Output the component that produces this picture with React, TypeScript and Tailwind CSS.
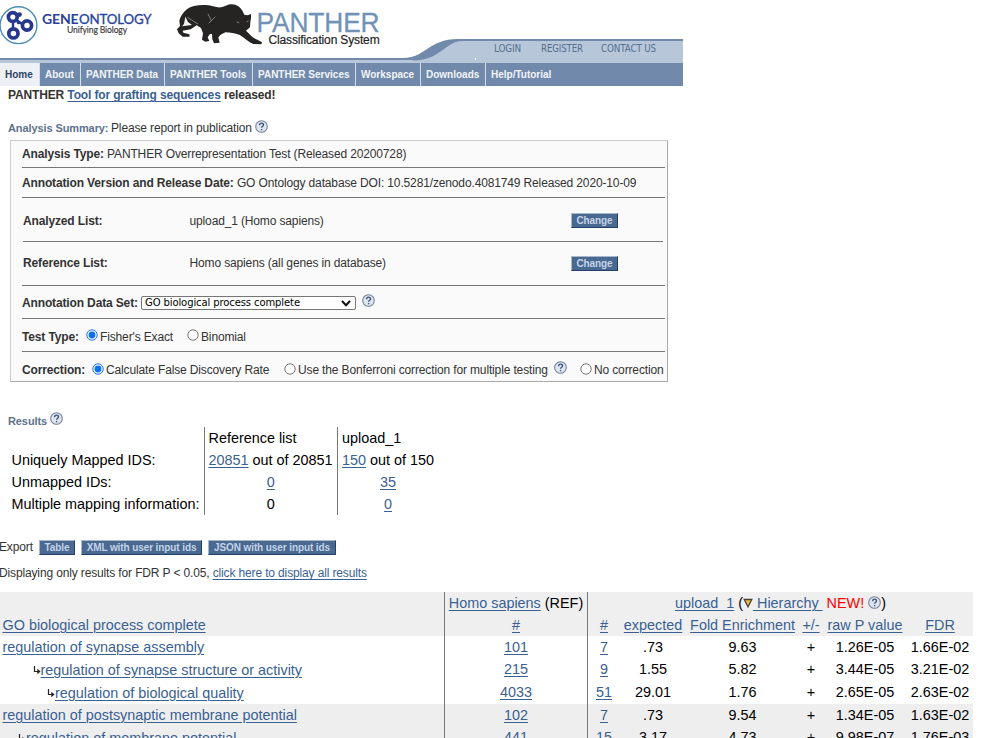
import React from 'react';

const Link = ({ children }: { children: React.ReactNode }) => (
  <a className="text-[#3a5f92] underline decoration-[1px] underline-offset-[2px]">{children}</a>
);

const Help = ({ className = '' }: { className?: string }) => (
  <svg className={'inline-block shrink-0 ' + className} width="13" height="13" viewBox="0 0 13 13">
    <circle cx="6.5" cy="6.5" r="5.8" fill="#dfe6ef" stroke="#74829a" strokeWidth="1.1" />
    <path d="M4.6 5.2C4.6 2.5 8.5 2.6 8.5 4.9C8.5 6.4 6.6 6.2 6.6 7.8M6.6 9V10.3" fill="none" stroke="#3f5479" strokeWidth="1.4" />
  </svg>
);

const Button = ({ children, className = '' }: { children: React.ReactNode; className?: string }) => (
  <button
    className={
      'h-[15px] shrink-0 whitespace-nowrap border border-b-[#23406b] border-l-[#a9b8cc] border-r-[#23406b] border-t-[#a9b8cc] bg-[#4a6990] text-center text-[10px] font-bold leading-[13px] tracking-[-0.1px] text-[#c3d3e8] ' +
      className
    }
  >
    {children}
  </button>
);

const Radio = ({ checked = false, className = '' }: { checked?: boolean; className?: string }) => (
  <svg className={'shrink-0 ' + className} width="12" height="12" viewBox="0 0 12 12">
    <circle cx="6" cy="6" r="5.2" fill="#fff" stroke={checked ? '#1a73e8' : '#767676'} strokeWidth="1" />
    {checked && <circle cx="6" cy="6" r="3.4" fill="#0b6fee" />}
  </svg>
);

const Header = () => (
  <svg className="block" width="683" height="63" viewBox="0 0 683 63">
    <path d="M0 60H405C435 60 433 40 462 40H683V63H0Z" fill="#b8c6d9" />
    <path d="M0 58H403C428 58 428 39 458 39H683V41H462C438 41 438 60 410 60H0Z" fill="#7189aa" />
    <path d="M408 58C426 55 429 40 458 40H464C444 42 441 60 414 60.5Z" fill="#7189aa" />
    <rect x="475" y="58" width="1" height="2" fill="#fff" />

    <circle cx="18.5" cy="25.2" r="18.4" fill="#fff" stroke="#4b8db1" strokeWidth="1.4" />
    <g fill="none" stroke="#27368e" strokeWidth="3.7">
      <circle cx="12.8" cy="17" r="4.4" />
      <circle cx="13.4" cy="33.4" r="4.6" />
      <circle cx="27" cy="25.5" r="4.6" />
      <path d="M13 22V29M17 20.5L22 24" strokeWidth="2.4" />
    </g>
    <circle cx="19.6" cy="14.6" r="2.3" fill="#27368e" />
    <circle cx="18.6" cy="22.4" r="1.9" fill="#27368e" />
    <text x="42" y="24.3" fontFamily="Lato, sans-serif" fontSize="13" fontWeight="700" fill="#29429b" textLength="36.5" lengthAdjust="spacingAndGlyphs">GENE</text>
    <text x="79" y="24.3" fontFamily="Lato, sans-serif" fontSize="13" fill="#29429b" stroke="#29429b" strokeWidth=".3" textLength="72.5" lengthAdjust="spacingAndGlyphs">ONTOLOGY</text>
    <text x="67" y="33.3" fontFamily="Lato, sans-serif" fontSize="9" fill="#3a3a3a" stroke="#3a3a3a" strokeWidth=".15" textLength="60" lengthAdjust="spacingAndGlyphs">Unifying Biology</text>

    <g transform="translate(170 0) scale(.33333)">
      <path d="M28 62C34 40 52 22 72 18C90 14 112 14 126 18C138 20 144 23 152 22C166 20 172 13 186 13C200 13 212 22 218 34L223 44L233 46L243 42L243 54L241 66L240 82L228 92C240 104 250 115 262 119L276 127L274 133L250 132C236 126 222 112 208 104C195 100 180 98 166 97L152 104L145 112L149 128L132 130L127 118L126 102L120 102L113 112L118 123L106 125L96 119L99 100L93 84L80 76L62 88L38 92L40 98L58 103L59 110L38 110L26 100L21 88L30 78Z" fill="#252423" />
      <path d="M46 50L42 72L36 79L66 75L54 66Z" fill="#f4f4f4" />
      <path d="M52 52L84 72M114 42L124 62M136 50L116 70M200 66L208 68M230 65L236 63" fill="none" stroke="#bdbdbd" strokeWidth="1.8" />
    </g>
    <text x="256.5" y="32" fontFamily="Liberation Sans, sans-serif" fontSize="28" fill="#7192b6" stroke="#7192b6" strokeWidth=".3" textLength="123" lengthAdjust="spacingAndGlyphs">PANTHER</text>
    <text x="268.5" y="44.3" fontFamily="Liberation Sans, sans-serif" fontSize="12" fill="#252525" stroke="#252525" strokeWidth=".2" textLength="111" lengthAdjust="spacingAndGlyphs">Classification System</text>
    <g fontFamily="DejaVu Sans Condensed, DejaVu Sans, sans-serif" fontSize="10" fill="#55708f">
      <text x="494" y="52" textLength="27" lengthAdjust="spacingAndGlyphs">LOGIN</text>
      <text x="541" y="52" textLength="42" lengthAdjust="spacingAndGlyphs">REGISTER</text>
      <text x="601" y="52" textLength="55" lengthAdjust="spacingAndGlyphs">CONTACT US</text>
    </g>
  </svg>
);

const tabs: [string, string][] = [
  ['Home', 'w-[40px] bg-[#edf0f5] text-[#2f4568] pl-[5px] border-r'],
  ['About', 'w-[41px] pl-[5px] border-r'],
  ['PANTHER Data', 'w-[84px] pl-[5px] border-r'],
  ['PANTHER Tools', 'w-[88px] pl-[5px] border-r'],
  ['PANTHER Services', 'w-[103px] pl-[5px] border-r'],
  ['Workspace', 'w-[65px] pl-[5px] border-r'],
  ['Downloads', 'w-[65px] pl-[5px] border-r'],
  ['Help/Tutorial', 'w-[197px] pl-[5px]'],
];

const ListRow = ({ label, value, className }: { label: string; value: string; className: string }) => (
  <div className={'flex items-center ' + className}>
    <b className="w-[166px]">{label}</b>
    <span className="w-[382px] pl-[0.5px]">{value}</span>
    <Button className="w-[47px]">Change</Button>
  </div>
);

const cols = 'grid grid-cols-[444px_143px_33px_66px_113px_24px_84px_66px] w-[973px]';

type Row = { name: string; indent: string; child: boolean; v: string[]; bg: string; h: string };
const rows: Row[] = [
  { name: 'regulation of synapse assembly', indent: 'pl-[2.5px]', child: false, v: ['101', '7', '.73', '9.63', '+', '1.26E-05', '1.66E-02'], bg: 'bg-white', h: 'h-[22px]' },
  { name: 'regulation of synapse structure or activity', indent: 'pl-[32.5px]', child: true, v: ['215', '9', '1.55', '5.82', '+', '3.44E-05', '3.21E-02'], bg: 'bg-white', h: 'h-[23px]' },
  { name: 'regulation of biological quality', indent: 'pl-[47px]', child: true, v: ['4033', '51', '29.01', '1.76', '+', '2.65E-05', '2.63E-02'], bg: 'bg-white', h: 'h-[23px]' },
  { name: 'regulation of postsynaptic membrane potential', indent: 'pl-[2.5px]', child: false, v: ['102', '7', '.73', '9.54', '+', '1.34E-05', '1.63E-02'], bg: 'bg-[#eeeeee]', h: 'h-[22px]' },
  { name: 'regulation of membrane potential', indent: 'pl-[18px]', child: true, v: ['441', '15', '3.17', '4.73', '+', '9.98E-07', '1.76E-03'], bg: 'bg-[#eeeeee]', h: 'h-[23px]' },
];

const Branch = () => (
  <svg className="mt-px shrink-0" width="8" height="9" viewBox="0 0 8 9">
    <path d="M1.5 0V5.5H5" fill="none" stroke="#222" strokeWidth="1.2" />
    <path d="M4.3 2.8L7.6 5.5L4.3 8.2Z" fill="#222" />
  </svg>
);

export default function App() {
  return (
    <div className="h-[738px] w-[984px] overflow-hidden bg-white font-['Liberation_Sans',Arial,sans-serif] text-[12px] leading-[18px] tracking-[-0.14px] text-[#333]">
      <Header />
      <nav className="flex h-[23px] w-[683px] bg-[#7189aa] text-[10px] font-bold leading-[23px] tracking-normal text-[#f1f5fa]">
        {tabs.map(([t, c]) => (
          <div key={t} className={'shrink-0 whitespace-nowrap border-[#d5deea] ' + c}>{t}</div>
        ))}
      </nav>
      <div className="h-[18px] pl-[8px] font-bold leading-[18px]">
        PANTHER <Link>Tool for grafting sequences</Link> released!
      </div>
      <div className="mt-[15px] flex h-[18px] items-center pl-[8px]">
        <b className="w-[103px] text-[11px] tracking-[-0.1px] text-[#5d718e]">Analysis Summary:</b>
        <span className="w-[144px] whitespace-nowrap">Please report in publication</span>
        <Help className="-mt-[3px]" />
      </div>

      <section className="ml-[10px] mt-[3px] h-[242px] w-[658px] whitespace-nowrap border border-b-[#aaa] border-l-[#ccc] border-r-[#aaa] border-t-[#ccc] bg-[#fafafa] pl-[11px]">
        <div className="flex h-[27px] w-[643px] items-center border-b border-[#777] pb-px">
          <span><b>Analysis Type:</b> PANTHER Overrepresentation Test (Released 20200728)</span>
        </div>
        <div className="flex h-[30px] w-[643px] items-center border-b border-[#777]">
          <span><b>Annotation Version and Release Date:</b> GO Ontology database DOI: 10.5281/zenodo.4081749 Released 2020-10-09</span>
        </div>
        <ListRow label="Analyzed List:" value="upload_1 (Homo sapiens)" className="ml-px h-[44px] w-[640px] border-b border-[#777] pt-[2px]" />
        <ListRow label="Reference List:" value="Homo sapiens (all genes in database)" className="ml-px h-[43px] w-[641px] pb-px" />
        <div className="flex h-[34px] w-[643px] items-center border-b border-t border-[#777] pt-[2px]">
          <b className="w-[119px]">Annotation Data Set:</b>
          <div className="flex h-[14px] w-[215px] items-center justify-between rounded-[2px] border border-[#767676] bg-white pl-[3px] pr-[4px] font-['DejaVu_Sans',Verdana,sans-serif] text-[10px] leading-[12px] tracking-[-0.1px] text-black">
            <span>GO biological process complete</span>
            <svg width="10" height="7" viewBox="0 0 10 7"><path d="M1 1L5 5.3L9 1" fill="none" stroke="#111" strokeWidth="2" /></svg>
          </div>
          <Help className="-mt-[6px] ml-[6px]" />
        </div>
        <div className="flex h-[33px] w-[643px] items-center border-b border-[#777] pt-[3px]">
          <b className="w-[64px]">Test Type:</b>
          <Radio checked className="-mt-[3px]" />
          <span className="ml-[2px] w-[87px]">Fisher's Exact</span>
          <Radio className="-mt-[3px]" />
          <span className="ml-[2px]">Binomial</span>
        </div>
        <div className="flex h-[33px] items-center pt-[3px]">
          <b className="w-[70px]">Correction:</b>
          <Radio checked className="-mt-[3px]" />
          <span className="ml-[2px] w-[178px]">Calculate False Discovery Rate</span>
          <Radio className="-mt-[3px]" />
          <span className="ml-[2px] w-[256px]">Use the Bonferroni correction for multiple testing</span>
          <Help className="-mt-[5px]" />
          <Radio className="-mt-[3px] ml-[13px]" />
          <span className="ml-[2px]">No correction</span>
        </div>
      </section>

      <div className="mt-[30px] flex h-[15px] items-center pl-[8px]">
        <b className="w-[42px] pt-[3px] text-[11px] tracking-[-0.1px] text-[#5d718e]">Results</b>
        <Help className="-mt-[3px]" />
      </div>

      <div className="grid h-[88px] grid-cols-[204px_133px_100px] whitespace-nowrap text-[14.4px] leading-[22px] tracking-normal text-black">
        <div className="pl-[11.5px] pt-[22px]">
          <div>Uniquely Mapped IDS:</div>
          <div>Unmapped IDs:</div>
          <div>Multiple mapping information:</div>
        </div>
        <div className="border-l border-[#777] pl-[3.5px]">
          <div>Reference list</div>
          <div><Link>20851</Link> out of 20851</div>
          <div className="pr-[4px] text-center"><Link>0</Link></div>
          <div className="pr-[4px] text-center">0</div>
        </div>
        <div className="border-l border-[#777] pl-[4px]">
          <div>upload_1</div>
          <div><Link>150</Link> out of 150</div>
          <div className="pr-[3px] text-center"><Link>35</Link></div>
          <div className="pr-[3px] text-center"><Link>0</Link></div>
        </div>
      </div>

      <div className="mt-[25px] flex h-[15px] items-center">
        <span className="-ml-px w-[40px] pb-px">Export</span>
        <Button className="w-[36px]">Table</Button>
        <Button className="ml-[6px] w-[121px]">XML with user input ids</Button>
        <Button className="ml-[6px] w-[128px]">JSON with user input ids</Button>
      </div>
      <div className="-ml-px mt-[9px] h-[18px] leading-[18px]">
        Displaying only results for FDR P &lt; 0.05, <Link>click here to display all results</Link>
      </div>

      <div className="mt-[10px] whitespace-nowrap text-center text-[14.4px] leading-[22px] tracking-normal text-black">
        <div className="grid h-[22px] w-[973px] grid-cols-[444px_143px_386px] bg-[#efefef]">
          <div />
          <div className="border-l border-[#777]"><Link>Homo sapiens</Link> (REF)</div>
          <div className="flex items-center justify-center border-l border-[#777]">
            <span className="[text-decoration-skip-ink:none]"><Link>upload_1</Link></span>
            <span className="ml-[4px]">(</span>
            <svg width="10" height="10" viewBox="0 0 10 10"><path d="M1.2 1.5H8.8L5 8.8Z" fill="#edb84b" stroke="#4b4030" strokeWidth="1.3" /></svg>
            <span className="whitespace-pre"><Link> Hierarchy </Link></span>
            <span className="ml-[4px] text-[#f00]">NEW!</span>
            <Help className="-mt-[2px] ml-[4px]" />
            <span>)</span>
          </div>
        </div>
        <div className={cols + ' h-[22px] bg-[#efefef]'}>
          <div className="pl-[2.5px] text-left"><Link>GO biological process complete</Link></div>
          {['#', '#', 'expected', 'Fold Enrichment', '+/-', 'raw P value', 'FDR'].map((t, i) => (
            <div key={i} className={i < 2 ? 'border-l border-[#777]' : ''}><Link>{t}</Link></div>
          ))}
        </div>
        {rows.map((r) => (
          <div key={r.name} className={cols + ' ' + r.bg + ' ' + r.h}>
            <div className={'flex items-center text-left ' + r.indent}>
              {r.child && <Branch />}
              <Link>{r.name}</Link>
            </div>
            {r.v.map((t, i) => (
              <div key={i} className={i < 2 ? 'border-l border-[#777]' : ''}>{i < 2 ? <Link>{t}</Link> : t}</div>
            ))}
          </div>
        ))}
      </div>
    </div>
  );
}
